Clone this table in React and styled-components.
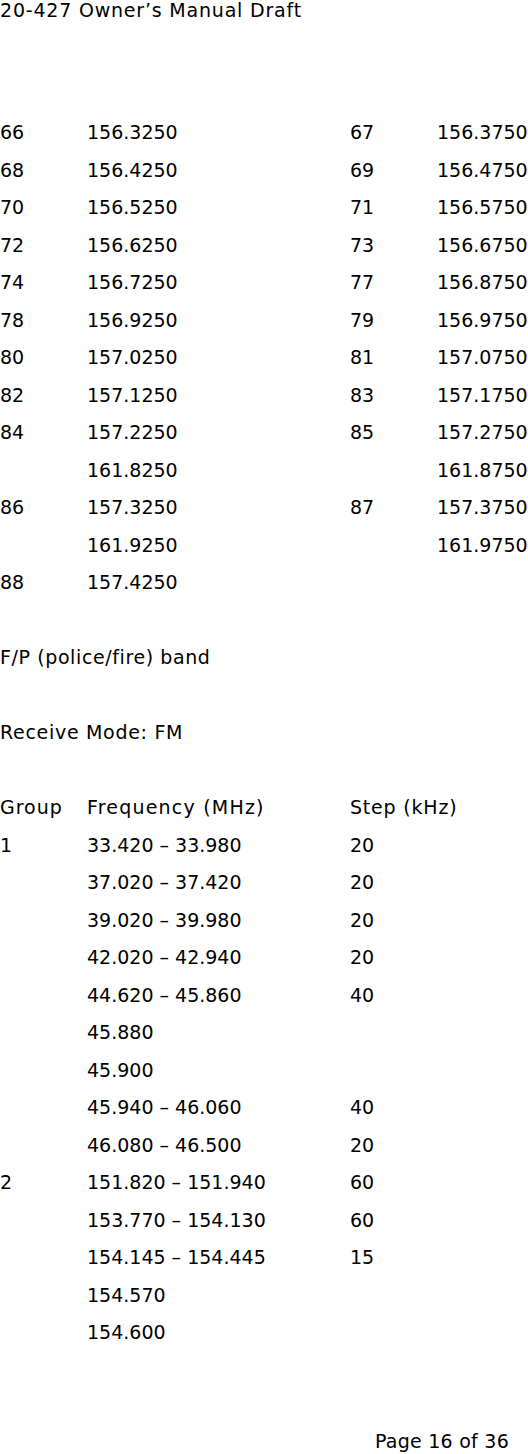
import React from "react";
import styled, { createGlobalStyle } from "styled-components";

const Global = createGlobalStyle`
  html, body { margin: 0; padding: 0; background: #fff; }
  body { font-family: "DejaVu Sans", "Liberation Sans", sans-serif; color: #000; }
`;

const Page = styled.div`
  width: 528px;
  height: 1454px;
  display: flex;
  flex-direction: column;
  font-size: 19px;
`;

const Header = styled.div`
  height: 20px;
  line-height: 20px;
  white-space: nowrap;
  letter-spacing: 0.8px;
`;

const Block = styled.div`
  margin-top: ${(p) => p.$mt || 0}px;
  display: flex;
  flex-direction: column;
`;

const Row = styled.div`
  height: 37.5px;
  line-height: 37.5px;
  display: grid;
  grid-template-columns: ${(p) => p.$cols};
  white-space: nowrap;
`;

const Cell = styled.span`
  letter-spacing: ${(p) => p.$ls || 0}px;
`;

const Line = styled.div`
  height: 37.5px;
  line-height: 37.5px;
  white-space: nowrap;
  letter-spacing: ${(p) => p.$ls || 0}px;
`;

const Footer = styled.div`
  margin-top: auto;
  height: 26px;
  line-height: 26px;
  text-align: right;
  padding-right: 19px;
  letter-spacing: 0.25px;
`;

const channels = [
  ["66", "156.3250", "67", "156.3750"],
  ["68", "156.4250", "69", "156.4750"],
  ["70", "156.5250", "71", "156.5750"],
  ["72", "156.6250", "73", "156.6750"],
  ["74", "156.7250", "77", "156.8750"],
  ["78", "156.9250", "79", "156.9750"],
  ["80", "157.0250", "81", "157.0750"],
  ["82", "157.1250", "83", "157.1750"],
  ["84", "157.2250", "85", "157.2750"],
  ["", "161.8250", "", "161.8750"],
  ["86", "157.3250", "87", "157.3750"],
  ["", "161.9250", "", "161.9750"],
  ["88", "157.4250", "", ""],
];

const groups = [
  ["1", "33.420 – 33.980", "20"],
  ["", "37.020 – 37.420", "20"],
  ["", "39.020 – 39.980", "20"],
  ["", "42.020 – 42.940", "20"],
  ["", "44.620 – 45.860", "40"],
  ["", "45.880", ""],
  ["", "45.900", ""],
  ["", "45.940 – 46.060", "40"],
  ["", "46.080 – 46.500", "20"],
  ["2", "151.820 – 151.940", "60"],
  ["", "153.770 – 154.130", "60"],
  ["", "154.145 – 154.445", "15"],
  ["", "154.570", ""],
  ["", "154.600", ""],
];

const GCOLS = "87px 263px 178px";

export default function App() {
  return (
    <Page>
      <Global />
      <Header>20-427 Owner’s Manual Draft</Header>
      <Block $mt={94.25}>
        {channels.map((r, i) => (
          <Row key={i} $cols="87px 263px 87px 91px">
            {r.map((c, j) => (
              <Cell key={j}>{c}</Cell>
            ))}
          </Row>
        ))}
        <Line />
        <Line $ls={0.6}>F/P (police/fire) band</Line>
        <Line />
        <Line $ls={0.7}>Receive Mode: FM</Line>
        <Line />
        <Row $cols={GCOLS}>
          <Cell $ls={1}>Group</Cell>
          <Cell $ls={1.2}>Frequency (MHz)</Cell>
          <Cell $ls={0.8}>Step (kHz)</Cell>
        </Row>
        {groups.map((r, i) => (
          <Row key={i} $cols={GCOLS}>
            {r.map((c, j) => (
              <Cell key={j}>{c}</Cell>
            ))}
          </Row>
        ))}
      </Block>
      <Footer>Page 16 of 36</Footer>
    </Page>
  );
}
